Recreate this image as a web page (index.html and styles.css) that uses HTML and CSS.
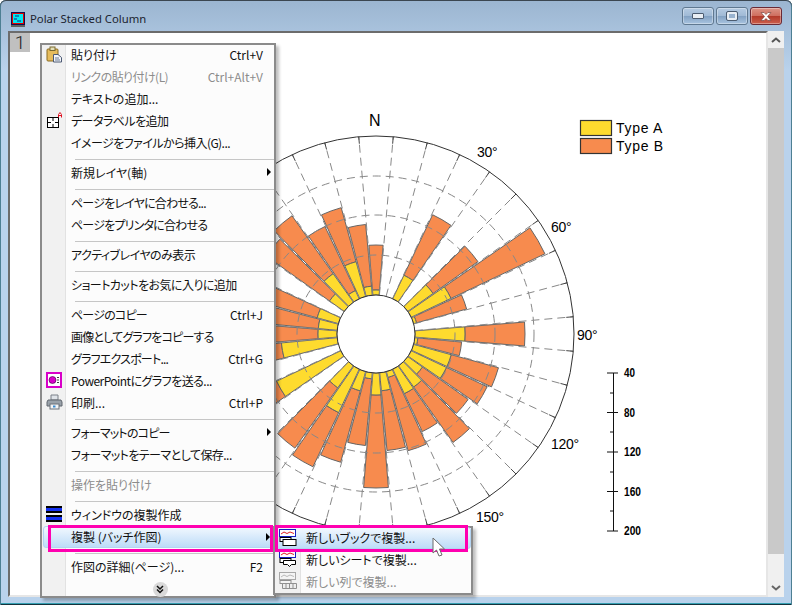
FILE: index.html
```html
<!DOCTYPE html>
<html>
<head>
    <title>Polar Stacked Column</title>
    <link rel="stylesheet" href="styles.css">
</head>
<body>
    <div class="window">
        <div class="titlebar">
            <svg class="app-icon" width="14" height="15" viewBox="0 0 14 15">
                <rect x="0" y="0" width="14" height="15" fill="#101050"/>
                <rect x="1.500" y="1.500" width="11" height="10" fill="#00e8f0" stroke="#e00000"/>
                <path d="M4 4h4M3 7h3M6 9h4" stroke="#102080" fill="none"/>
                <rect x="0" y="13" width="14" height="2" fill="#606060"/>
            </svg>
            <span class="title-text">Polar Stacked Column</span>
            <div class="win-buttons">
                <div class="win-btn"><span class="glyph-min"></span></div>
                <div class="win-btn"><span class="glyph-max"></span></div>
                <div class="win-btn win-close">
                    <svg width="16" height="11" viewBox="0 0 16 11"><path d="M3 1.500h3l2 2 2-2h3l-3.500 4 3.500 4h-3l-2-2-2 2h-3l3.500-4z" fill="#fff" stroke="#6b3a36" stroke-width=".6"/></svg>
                </div>
            </div>
        </div>

        <div class="main">
            <div class="page">
                <div class="layer-tab">1</div>
                <svg id="chart" class="chart" width="755" height="562" viewBox="10 33 755 562"></svg>
            </div>
            <div class="scrollbar">
                <div class="scroll-btn"><svg width="10" height="6" viewBox="0 0 10 6"><path d="M1 5l4-3.500L9 5" fill="none" stroke="#555" stroke-width="2"/></svg></div>
                <div class="scroll-track"></div>
                <div class="scroll-end"><svg width="10" height="6" viewBox="0 0 10 6"><path d="M1 1l4 3.500L9 1" fill="none" stroke="#666" stroke-width="2"/></svg></div>
            </div>
        </div>

        <div class="menu">
            <div class="row">
                <span class="ico">
                    <svg width="17" height="17" viewBox="0 0 17 17">
                        <rect x="1" y="3" width="11" height="12" rx="1" fill="#e6bc5c" stroke="#8a6a20"/>
                        <rect x="4" y="1" width="5" height="3.500" fill="#e4e0b8" stroke="#7a6a30"/>
                        <path d="M7.500 8.500h4.500l3.500 3v4.500h-8z" fill="#f4f6fa" stroke="#4c5a74"/>
                        <path d="M9 12h4M9 14h5" stroke="#6a7a94"/>
                    </svg>
                </span>
                <span class="label">貼り付け</span><span class="key">Ctrl+V</span>
            </div>
            <div class="row off"><span class="ico"></span><span class="label t1">リンクの貼り付け(L)</span><span class="key">Ctrl+Alt+V</span></div>
            <div class="row"><span class="ico"></span><span class="label">テキストの追加...</span></div>
            <div class="row">
                <span class="ico">
                    <svg width="17" height="17" viewBox="0 0 17 17">
                        <rect x="1.500" y="5.500" width="11" height="10" fill="#fff" stroke="#000"/>
                        <path d="M7 6v3M7 12v3M2 10.500h3M9 10.500h3" stroke="#000" fill="none"/>
                        <path d="M12.500 5.500v-3l1.500-2 1.500 2v3M12.500 3.500h3" stroke="#e01020" fill="none"/>
                    </svg>
                </span>
                <span class="label t1">データラベルを追加</span>
            </div>
            <div class="row"><span class="ico"></span><span class="label t1">イメージをファイルから挿入(G)...</span></div>
            <div class="sep"></div>
            <div class="row"><span class="ico"></span><span class="label">新規レイヤ(軸)</span><span class="arrow"></span></div>
            <div class="sep"></div>
            <div class="row"><span class="ico"></span><span class="label t2">ページをレイヤに合わせる...</span></div>
            <div class="row"><span class="ico"></span><span class="label t2">ページをプリンタに合わせる</span></div>
            <div class="sep"></div>
            <div class="row"><span class="ico"></span><span class="label t1">アクティブレイヤのみ表示</span></div>
            <div class="sep"></div>
            <div class="row"><span class="ico"></span><span class="label t1">ショートカットをお気に入りに追加</span></div>
            <div class="sep"></div>
            <div class="row"><span class="ico"></span><span class="label t2">ページのコピー</span><span class="key">Ctrl+J</span></div>
            <div class="row"><span class="ico"></span><span class="label t2">画像としてグラフをコピーする</span></div>
            <div class="row"><span class="ico"></span><span class="label t2">グラフエクスポート...</span><span class="key">Ctrl+G</span></div>
            <div class="row">
                <span class="ico">
                    <svg width="16" height="16" viewBox="0 0 16 16">
                        <rect x="1" y="1" width="14" height="14" fill="#fff" stroke="#d800c8" stroke-width="2"/>
                        <circle cx="6.500" cy="8" r="3.500" fill="#d800c8" stroke="#400040" stroke-width=".6"/>
                        <path d="M11 5.500h2M11 8h2M11 10.500h2" stroke="#404040"/>
                    </svg>
                </span>
                <span class="label t1">PowerPointにグラフを送る...</span>
            </div>
            <div class="row">
                <span class="ico">
                    <svg width="17" height="16" viewBox="0 0 17 16">
                        <path d="M5 1h7v5h-7z" fill="#dfe3e8" stroke="#7a8088"/>
                        <path d="M2 6h13l1 2v4h-15v-4z" fill="#9aa2aa" stroke="#60666e"/>
                        <rect x="4" y="10" width="9" height="5" fill="#f2f4f6" stroke="#6a7078"/>
                        <rect x="7" y="11.500" width="2.500" height="2" fill="#3a8ad0"/>
                    </svg>
                </span>
                <span class="label">印刷...</span><span class="key">Ctrl+P</span>
            </div>
            <div class="sep"></div>
            <div class="row"><span class="ico"></span><span class="label t2">フォーマットのコピー</span><span class="arrow"></span></div>
            <div class="row"><span class="ico"></span><span class="label t1">フォーマットをテーマとして保存...</span></div>
            <div class="sep"></div>
            <div class="row off"><span class="ico"></span><span class="label">操作を貼り付け</span></div>
            <div class="sep"></div>
            <div class="row">
                <span class="ico">
                    <svg width="16" height="16" viewBox="0 0 16 16">
                        <rect x="0" y="0" width="16" height="7" fill="#000"/>
                        <rect x="0" y="2" width="16" height="3" fill="#1430f0"/>
                        <rect x="0" y="9" width="16" height="7" fill="#000"/>
                        <rect x="0" y="11" width="16" height="3" fill="#1430f0"/>
                    </svg>
                </span>
                <span class="label">ウィンドウの複製作成</span>
            </div>
            <div class="row hot"><span class="ico"></span><span class="label">複製 (バッチ作図)</span><span class="arrow"></span></div>
            <div class="sep"></div>
            <div class="row"><span class="ico"></span><span class="label">作図の詳細(ページ)...</span><span class="key">F2</span></div>
            <div class="more">
                <span class="more-btn"><svg width="8" height="9" viewBox="0 0 8 9"><path d="M1 1l3 3 3-3M1 4.500l3 3 3-3" fill="none" stroke="#111" stroke-width="1.500"/></svg></span>
            </div>
        </div>

        <div class="submenu">
            <div class="row hot">
                <span class="ico">
                    <svg width="18" height="18" viewBox="0 0 18 18">
                        <rect x=".5" y=".5" width="16" height="7" fill="#fff" stroke="#1420c0"/>
                        <path d="M2 5l3-2 3 1.500 3-1.500 4 1.500" fill="none" stroke="#e02020"/>
                        <rect x="1" y="8.500" width="11" height="4" fill="#fff" stroke="#000"/>
                        <rect x="4" y="10.500" width="13" height="6" fill="#fff" stroke="#000"/>
                    </svg>
                </span>
                <span class="label">新しいブックで複製...</span>
            </div>
            <div class="row">
                <span class="ico">
                    <svg width="18" height="18" viewBox="0 0 18 18">
                        <rect x=".5" y=".5" width="16" height="7" fill="#fff" stroke="#1420c0"/>
                        <path d="M2 5l3-2 3 1.500 3-1.500 4 1.500" fill="none" stroke="#e02020"/>
                        <rect x="1" y="8.500" width="11" height="4" fill="#fff" stroke="#000"/>
                        <path d="M4.500 10.500h12v4h-4l-2 2-2-2h-4z" fill="#fff" stroke="#000"/>
                    </svg>
                </span>
                <span class="label">新しいシートで複製...</span>
            </div>
            <div class="row off">
                <span class="ico">
                    <svg width="18" height="18" viewBox="0 0 18 18">
                        <rect x=".5" y=".5" width="16" height="7" fill="#f4f4f4" stroke="#a8a8a8"/>
                        <path d="M2 5l3-2 3 1.500 3-1.500 4 1.500" fill="none" stroke="#b8b8b8"/>
                        <rect x="1" y="8.500" width="11" height="3" fill="#f4f4f4" stroke="#909090"/>
                        <path d="M3.500 11.500h14v5h-14zM7 11.500v5M10.500 11.500v5M14 11.500v5" fill="#eee" stroke="#909090"/>
                    </svg>
                </span>
                <span class="label">新しい列で複製...</span>
            </div>
        </div>

        <div class="mark mark-menu"></div>
        <div class="mark mark-sub"></div>
        <svg class="cursor" width="14" height="21" viewBox="0 0 14 21">
            <path d="M1 1v15l3.500-3 2.500 6 3-1-2.500-6h5z" fill="#fff" stroke="#6a6a6a"/>
        </svg>
    </div>

    <script src="chart.js"></script>
</body>
</html>
```

FILE: styles.css
```css
html, body {
    margin: 0;
    padding: 0;
    background-color: #fff;
}

body {
    font-family: "Noto Sans CJK JP", "Noto Sans", sans-serif;
    font-size: 12px;
    color: #111;
    overflow: hidden;
}

.window {
    position: relative;
    display: flex;
    flex-direction: column;
    box-sizing: border-box;
    width: 792px;
    height: 605px;
    padding: 0 8px 8px 8px;
    border-radius: 6px 6px 0 0;
    background: linear-gradient(#9bb5d0, #b9d2ec 70px);
    box-shadow: inset 0 1px #3b4650, inset 1px 0 #4d7f93, inset -1px 0 #4d7f93, inset 0 -1px #14323c, inset 0 -2px #35a0b2;
}

/* title bar */
.titlebar {
    display: flex;
    align-items: center;
    height: 31px;
    flex: none;
    margin-right: -8px;
}

.app-icon {
    margin: 7px 0 0 3px;
}

.title-text {
    margin: 6px 0 0 5px;
    font-family: "Noto Sans", sans-serif;
    font-size: 11.3px;
    color: #1c2430;
}

.win-buttons {
    display: flex;
    gap: 2px;
    margin: 1px 10px 0 auto;
}

.win-btn {
    display: flex;
    align-items: center;
    justify-content: center;
    box-sizing: border-box;
    width: 32px;
    height: 18px;
    border: 1px solid #5f7890;
    border-radius: 3px;
    background: linear-gradient(#b5cbe2 0%, #a0bad6 48%, #83a2c3 52%, #a9c4e0 100%);
    box-shadow: inset 0 0 0 1px rgba(255, 255, 255, 0.35);
}

.win-close {
    border-color: #6a2a35;
    background: linear-gradient(#dc9486 0%, #cf6f60 48%, #b33a2a 52%, #cc5f4c 100%);
}

.glyph-min {
    width: 10px;
    height: 4px;
    background-color: #e8eef4;
    border: 1px solid #4c5c70;
    border-radius: 1px;
}

.glyph-max {
    width: 6px;
    height: 4px;
    background-color: #9ab4d0;
    border: 2px solid #e8eef4;
    outline: 1px solid #4c5c70;
    border-radius: 1px;
}

/* graph area */
.main {
    display: flex;
    flex: 1;
    min-height: 0;
}

.page {
    position: relative;
    flex: 1;
    background-color: #fff;
    border-top: 2px solid #6c6c6c;
    border-left: 2px solid #6c6c6c;
    border-right: 2px solid #e6e6e6;
    border-bottom: 2px solid #e6e6e6;
}

.layer-tab {
    width: 20px;
    height: 19px;
    background-color: #c0c0c0;
    font-family: Roboto, sans-serif;
    font-weight: 300;
    font-size: 19px;
    line-height: 20px;
    text-align: center;
    color: #222;
}

.chart {
    position: absolute;
    left: 0;
    top: 0;
}

.chart text {
    font-family: "Liberation Sans", Arial, sans-serif;
    fill: #000;
}

.chart .north {
    font-size: 16px;
}

.chart .angle {
    font-size: 14px;
    letter-spacing: -0.3px;
}

.chart .legend {
    font-size: 14px;
    letter-spacing: 0.7px;
}

.chart .scale {
    font-size: 12px;
    font-weight: bold;
}

.scrollbar {
    display: flex;
    flex-direction: column;
    width: 16px;
    flex: none;
}

.scroll-btn {
    display: flex;
    align-items: center;
    justify-content: center;
    height: 17px;
    background-color: #f0f0f0;
}

.scroll-track {
    flex: 1;
    background-color: #c9c9c9;
}

.scroll-end {
    display: flex;
    align-items: flex-end;
    justify-content: center;
    box-sizing: border-box;
    height: 43px;
    padding-bottom: 6px;
    background-color: #f0f0f0;
}

/* popup menus */
.menu,
.submenu {
    position: absolute;
    box-sizing: border-box;
    border: 2px solid #8b8b8b;
    background: linear-gradient(90deg, #f1f1f1 23px, #e2e2e2 23px, #e2e2e2 24px, #fcfcfc 24px);
    box-shadow: 3px 3px 3px rgba(0, 0, 0, 0.25);
}

.menu {
    left: 40px;
    top: 43px;
    width: 236px;
    height: 555px;
}

.submenu {
    left: 273px;
    top: 526px;
    width: 200px;
    height: 69px;
    background: linear-gradient(90deg, #f1f1f1 25px, #e2e2e2 25px, #e2e2e2 26px, #fcfcfc 26px);
}

.row {
    position: relative;
    display: flex;
    align-items: center;
    box-sizing: border-box;
    height: 22px;
    padding: 0 11px 2px 0;
    font-feature-settings: "palt";
}

.menu > .row:first-child,
.submenu > .row:first-child {
    margin-top: -1px;
}

.ico {
    display: flex;
    align-items: center;
    justify-content: center;
    width: 24px;
    height: 20px;
    flex: none;
}

.label {
    margin-left: 5px;
    white-space: nowrap;
}

.t1 {
    letter-spacing: -0.55px;
}

.t2 {
    letter-spacing: -0.8px;
}

.key {
    margin-left: auto;
    white-space: nowrap;
}

.off {
    color: #8c8c8c;
}

.hot {
    margin-left: 1px;
    border: 1px solid #b4d4f2;
    padding-bottom: 1px;
    border-radius: 3px;
    background: linear-gradient(#f2f8fe, #bddcf8);
}

.hot .ico {
    margin-left: -2px;
}

.arrow {
    position: absolute;
    right: 3px;
    top: 6px;
    border-left: 4px solid #000;
    border-top: 4px solid transparent;
    border-bottom: 4px solid transparent;
}

.sep {
    height: 8px;
    margin-left: 33px;
    background: linear-gradient(#fcfcfc 5px, #c6c6c6 5px, #c6c6c6 6px, #fcfcfc 6px);
}

.more {
    display: flex;
    justify-content: center;
    padding-top: 4px;
    margin-left: 4px;
}

.more-btn {
    display: flex;
    align-items: center;
    justify-content: center;
    width: 15px;
    height: 15px;
    border-radius: 50%;
    background-color: #d9d9d9;
}

.submenu .ico {
    width: 26px;
}

/* pink call-out boxes */
.mark {
    position: absolute;
    box-sizing: border-box;
    border: 3px solid #ff00b0;
}

.mark-menu {
    left: 48px;
    top: 525px;
    width: 225px;
    height: 27px;
}

.mark-sub {
    left: 275px;
    top: 525px;
    width: 193px;
    height: 27px;
}

.cursor {
    position: absolute;
    left: 432px;
    top: 537px;
}
```

FILE: chart.js
```js
var NS = "http://www.w3.org/2000/svg";
var svg = document.getElementById("chart");

var cx = 376;
var cy = 334;
var hub = 39;
var outer = 198;

// angle, end of Type A, end of Type B (radius in pixels)
var bars = [
    [0, 44, 89], [30, 65, 132], [50, 70, 125], [60, 83, 187], [70, 42, 94],
    [90, 89, 149], [100, 42, 86], [110, 78, 127], [120, 78, 123], [130, 57, 113],
    [140, 65, 133], [150, 66, 108], [160, 45, 121], [170, 57, 117], [180, 61, 154],
    [190, 45, 112], [200, 59, 133], [210, 87, 147], [220, 66, 140], [240, 110, 135],
    [260, 95, 110], [270, 58, 130], [280, 58, 125], [290, 61, 120], [310, 57, 135],
    [320, 74, 145], [330, 48, 119], [340, 75, 131], [350, 48, 110]
];

function add(name, attrs, text) {
    var el = document.createElementNS(NS, name);
    for (var key in attrs) {
        el.setAttribute(key, attrs[key]);
    }
    if (text) {
        el.textContent = text;
    }
    svg.appendChild(el);
    return el;
}

function point(r, deg) {
    var a = deg * Math.PI / 180;
    return (cx + r * Math.sin(a)).toFixed(2) + " " + (cy - r * Math.cos(a)).toFixed(2);
}

function sector(r1, r2, deg) {
    var a = deg - 4.6;
    var b = deg + 4.6;
    return "M" + point(r1, a) + "L" + point(r2, a) +
        "A" + r2 + " " + r2 + " 0 0 1 " + point(r2, b) +
        "L" + point(r1, b) +
        "A" + r1 + " " + r1 + " 0 0 0 " + point(r1, a) + "Z";
}

// bars
bars.forEach(function (b) {
    add("path", { d: sector(b[1], b[2], b[0]), fill: "#f78b4e", stroke: "#666", "stroke-width": 1 });
    add("path", { d: sector(hub, b[1], b[0]), fill: "#fedb2e", stroke: "#666", "stroke-width": 1 });
});

// grid
[79, 119, 158].forEach(function (r) {
    add("circle", { cx: cx, cy: cy, r: r, fill: "none", stroke: "#888", "stroke-dasharray": "8 5" });
});
for (var deg = 5; deg < 360; deg += 10) {
    add("path", { d: "M" + point(hub, deg) + "L" + point(outer, deg), stroke: "#888", "stroke-dasharray": "8 5" });
    add("path", { d: "M" + point(outer - 7, deg) + "L" + point(outer, deg), stroke: "#444" });
}

add("circle", { cx: cx, cy: cy, r: hub, fill: "#fff", stroke: "#333" });
add("circle", { cx: cx, cy: cy, r: outer, fill: "none", stroke: "#333" });

// angle labels
add("text", { x: 369, y: 126, "class": "north" }, "N");
[[477, 157, "30°"], [551, 232, "60°"], [577, 340, "90°"], [551, 449, "120°"], [476, 522, "150°"]].forEach(function (t) {
    add("text", { x: t[0], y: t[1], "class": "angle" }, t[2]);
});

// legend
add("rect", { x: 580.5, y: 120.5, width: 31, height: 15, fill: "#fedb2e", stroke: "#333", "stroke-width": 1.2 });
add("rect", { x: 580.5, y: 138.5, width: 31, height: 15, fill: "#f78b4e", stroke: "#333", "stroke-width": 1.2 });
add("text", { x: 616, y: 133, "class": "legend" }, "Type A");
add("text", { x: 616, y: 151, "class": "legend" }, "Type B");

// radius scale
add("path", { d: "M613.5 373V531", stroke: "#111" });
[[373, "40", 11], [412.5, "80", 11], [452, "120", 17], [491.5, "160", 17], [531, "200", 17]].forEach(function (t) {
    add("path", { d: "M607 " + t[0] + "H618", stroke: "#111" });
    add("text", { x: 624, y: t[0] + 4, "class": "scale", textLength: t[2], lengthAdjust: "spacingAndGlyphs" }, t[1]);
});
[393, 432, 472, 511].forEach(function (y) {
    add("path", { d: "M610 " + y + "H614", stroke: "#111" });
});
```
